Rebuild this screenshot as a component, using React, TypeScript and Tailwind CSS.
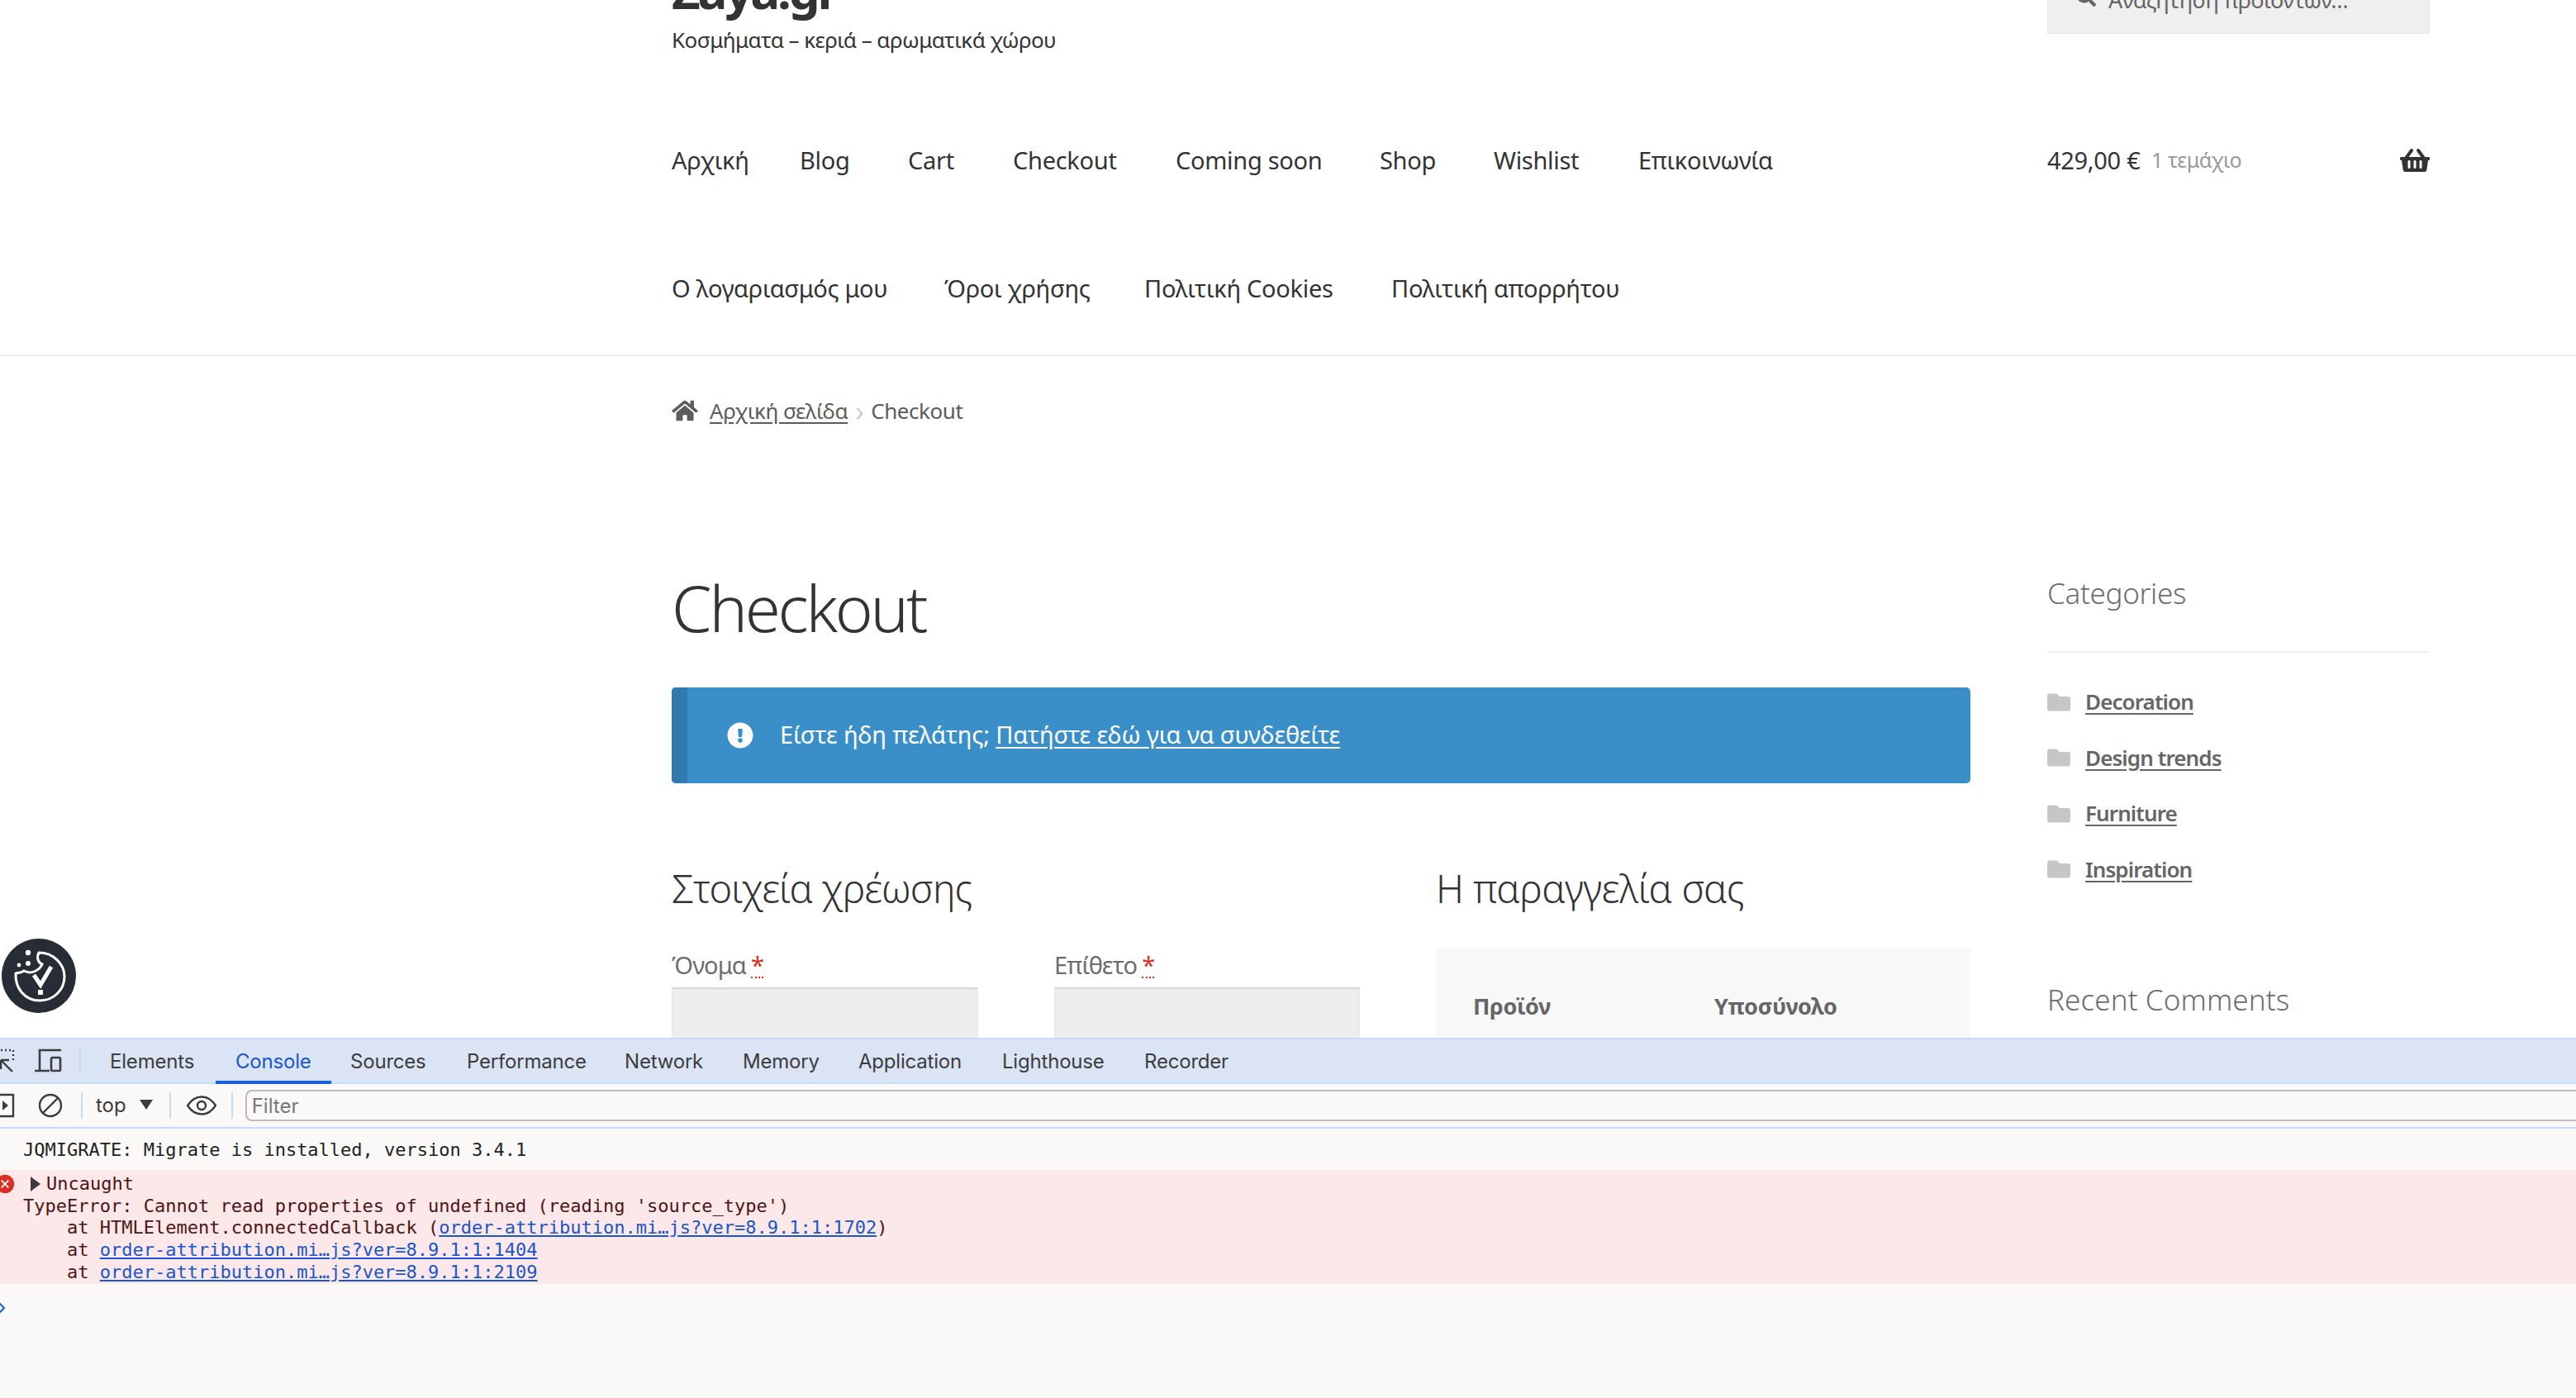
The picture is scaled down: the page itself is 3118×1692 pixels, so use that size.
import React from "react";
import { FaHome, FaShoppingBasket, FaFolder, FaSearch, FaExclamationCircle } from "react-icons/fa";

const NavItem = ({ w, label }: { w: string; label: string }) => (
  <a className={`${w} block whitespace-nowrap text-[#333333]`}>{label}</a>
);

const Cat = ({ label }: { label: string }) => (
  <li className="flex h-[67.5px] items-center">
    <FaFolder className="h-[28px] w-[28px] shrink-0 text-[#c6c6c6]" />
    <a className="ml-[18px] text-[26px] font-semibold tracking-[-0.9px] text-[#666666] underline underline-offset-4">{label}</a>
  </li>
);

const Req = () => (
  <span className="ml-[6px] border-b-2 border-dotted border-[#d9301c] leading-none text-[#d9301c]">*</span>
);

const Tab = ({ w, label, active }: { w: string; label: string; active?: boolean }) => (
  <div className={`${w} relative flex h-full items-center pt-[2px] text-[24px] tracking-[-0.2px] ${active ? "text-[#1a56c9]" : "text-[#3c3c3c]"}`}>
    {label}
  </div>
);

const Link = ({ children }: { children: React.ReactNode }) => (
  <a className="text-[#1a56c9] underline underline-offset-2">{children}</a>
);

const Sep = ({ cls }: { cls: string }) => <div className={`${cls} h-[32px] w-[2px] shrink-0 bg-[#c9dcf6]`} />;

export default function App() {
  return (
    <div className="relative flex h-[1692px] w-[3118px] flex-col overflow-hidden bg-white font-['Noto_Sans',sans-serif]">
      {/* Page */}
      <div className="h-[1256px] shrink-0 overflow-hidden bg-white">
        <header className="h-[431px] border-b-2 border-[#eeeeee] pl-[813px]">
          <div className="flex h-[116px] w-[2128px] justify-between">
            <div>
              <div className="-mt-[54px] text-[60px] font-bold leading-[84px] tracking-[-3.2px] text-[#333333]">Zaya.gr</div>
              <div className="text-[26px] leading-[36px] tracking-[-0.55px] text-[#333333]">Κοσμήματα – κεριά – αρωματικά χώρου</div>
            </div>
            <div className="-mt-[40px] flex h-[81px] w-[463px] items-start gap-[15px] border border-[#e8e8e8] bg-[#efefef] pl-[34px] pt-[21px] text-[27px] leading-[36px] text-[#666666]">
              <FaSearch className="mt-[2px] h-[24px] w-[24px]" />
              <span className="tracking-[-0.6px]">Αναζήτηση προϊόντων…</span>
            </div>
          </div>
          <div className="flex h-[155px] w-[2128px] items-center text-[29px] tracking-[-0.3px]">
            <NavItem w="w-[155px]" label="Αρχική" />
            <NavItem w="w-[131px]" label="Blog" />
            <NavItem w="w-[127px]" label="Cart" />
            <NavItem w="w-[197px]" label="Checkout" />
            <NavItem w="w-[247px]" label="Coming soon" />
            <NavItem w="w-[138px]" label="Shop" />
            <NavItem w="w-[175px]" label="Wishlist" />
            <NavItem w="w-[495px]" label="Επικοινωνία" />
            <div className="flex w-[463px] items-center">
              <span className="w-[126px] whitespace-nowrap text-[#333333]">429,00 €</span>
              <span className="text-[25px] tracking-[-0.4px] text-[#999999]">1 τεμάχιο</span>
              <FaShoppingBasket className="ml-auto h-[32px] w-[36px] text-[#333333]" />
            </div>
          </div>
          <div className="flex h-[155px] items-center text-[29px] tracking-[-0.3px]">
            <NavItem w="w-[330px]" label="Ο λογαριασμός μου" />
            <NavItem w="w-[242px]" label="Όροι χρήσης" />
            <NavItem w="w-[299px]" label="Πολιτική Cookies" />
            <NavItem w="w-[300px]" label="Πολιτική απορρήτου" />
          </div>
        </header>

        <div className="flex h-[132px] items-center pl-[813px] text-[26px] tracking-[-0.45px] text-[#5c5c5c]">
          <FaHome className="h-[28px] w-[32px] text-[#5c5c5c]" />
          <a className="ml-[14px] underline underline-offset-4">Αρχική σελίδα</a>
          <span className="mx-[9px] text-[34px] leading-none text-[#cccccc]">›</span>
          <span>Checkout</span>
        </div>

        <div className="flex gap-[93px] pl-[813px]">
          <main className="w-[1572px] shrink-0">
            <h1 className="mt-[122px] h-[100px] text-[78px] font-light leading-[100px] tracking-[-3.2px] text-[#333333]">Checkout</h1>
            <div className="mt-[47px] flex h-[116px] items-center overflow-hidden rounded-[5px] bg-[#3a8fc8] text-[29px] tracking-[-0.15px] text-white">
              <div className="h-full w-[19px] bg-[#3179ae]" />
              <FaExclamationCircle className="ml-[48px] h-[32px] w-[32px]" />
              <span className="ml-[32px] pb-[3px]">Είστε ήδη πελάτης; <a className="underline underline-offset-4">Πατήστε εδώ για να συνδεθείτε</a></span>
            </div>
            <div className="mt-[92px] flex gap-[91px]">
              <div className="w-[834px]">
                <h2 className="h-[70px] text-[47px] font-light leading-[70px] tracking-[-1px] text-[#333333]">Στοιχεία χρέωσης</h2>
                <div className="mt-[38px] flex gap-[92px]">
                  <div className="w-[371px]">
                    <div className="flex h-[40px] items-center text-[29px] tracking-[-0.8px] text-[#6d6d6d]">Όνομα <Req /></div>
                    <div className="mt-[7px] h-[80px] bg-[#eeeeee] shadow-[inset_0_2px_2px_rgba(0,0,0,0.1)]" />
                  </div>
                  <div className="w-[370px]">
                    <div className="flex h-[40px] items-center text-[29px] tracking-[-0.8px] text-[#6d6d6d]">Επίθετο <Req /></div>
                    <div className="mt-[7px] h-[80px] bg-[#eeeeee] shadow-[inset_0_2px_2px_rgba(0,0,0,0.1)]" />
                  </div>
                </div>
              </div>
              <div className="w-[647px]">
                <h2 className="h-[70px] text-[47px] font-light leading-[70px] tracking-[-0.5px] text-[#333333]">Η παραγγελία σας</h2>
                <div className="mt-[37px] flex h-[200px] bg-[#f8f8f8] pl-[45px] pt-[51px] text-[27px] font-bold leading-[40px] tracking-[-0.3px] text-[#666666]">
                  <span className="w-[292px]">Προϊόν</span>
                  <span>Υποσύνολο</span>
                </div>
              </div>
            </div>
          </main>

          <aside className="w-[463px] shrink-0">
            <h3 className="mt-[125px] h-[60px] text-[35px] font-light leading-[60px] tracking-[-0.3px] text-[#6d6d6d]">Categories</h3>
            <div className="mt-[40px] h-[2px] bg-[#f2f2f2]" />
            <ul className="mt-[26px]">
              <Cat label="Decoration" />
              <Cat label="Design trends" />
              <Cat label="Furniture" />
              <Cat label="Inspiration" />
            </ul>
            <h3 className="mt-[94px] h-[60px] text-[35px] font-light leading-[60px] tracking-[0.1px] text-[#6d6d6d]">Recent Comments</h3>
          </aside>
        </div>
      </div>

      {/* Cookie badge */}
      <div className="absolute left-[2px] top-[1136px] flex h-[90px] w-[90px] items-center justify-center rounded-full bg-[#282c34]">
        <svg viewBox="0 0 90 90" className="h-[90px] w-[90px]" fill="none" stroke="white" strokeWidth="3">
          <path d="M45 17 C42 23 44 29 49 31 C46 38 36 44 27 39 C23 42 19 41 17 42 C16 60 28 75 46 75 C63 75 76 62 76 46 C76 31 63 17 45 17 Z" />
          <circle cx="32" cy="17" r="3.2" fill="white" stroke="none" />
          <circle cx="32" cy="30" r="3" fill="white" stroke="none" />
          <circle cx="21" cy="32" r="2.4" fill="white" stroke="none" />
          <path d="M39 44 L47 56 L60 34" strokeWidth="5" />
          <rect x="44" y="62" width="6" height="6" fill="white" stroke="none" />
        </svg>
      </div>

      {/* DevTools */}
      <div className="flex min-h-0 flex-1 flex-col bg-[#faf9f7] font-['Inter',sans-serif]">
        <div className="flex h-[56px] shrink-0 items-center border-y-2 border-[#c7dcf8] bg-[#dae4f5]">
          <svg viewBox="0 0 20 30" className="-ml-[2px] h-[30px] w-[20px] shrink-0" fill="none" stroke="#3c3c3c" strokeWidth="2.4">
            <path d="M3 2h2M8 2h2M13 2h2M18 2v2M18 7v2M18 12v2" />
            <path d="M3 14h10M3 14v11M3 14l14 14" />
          </svg>
          <svg viewBox="0 0 34 30" className="ml-[24px] h-[30px] w-[34px] shrink-0" fill="none" stroke="#3c3c3c" strokeWidth="2.6">
            <path d="M32 2H6v24M0 27h18" />
            <rect x="20" y="11" width="11" height="16" rx="1.5" />
          </svg>
          <Sep cls="ml-[20px]" />
          <div className="ml-[35px] flex h-full items-center">
            <Tab w="w-[152px]" label="Elements" />
            <div className="relative h-full w-[139px]">
              <Tab w="w-full" label="Console" active />
              <div className="absolute -left-[24px] -bottom-[2px] h-[4px] w-[140px] bg-[#1a5fe0]" />
            </div>
            <Tab w="w-[141px]" label="Sources" />
            <Tab w="w-[191px]" label="Performance" />
            <Tab w="w-[143px]" label="Network" />
            <Tab w="w-[140px]" label="Memory" />
            <Tab w="w-[174px]" label="Application" />
            <Tab w="w-[172px]" label="Lighthouse" />
            <Tab w="w-[120px]" label="Recorder" />
          </div>
        </div>

        <div className="flex h-[54px] shrink-0 items-center border-b-2 border-[#c7dcf8]">
          <svg viewBox="0 0 18 30" className="h-[30px] w-[18px] shrink-0" fill="none" stroke="#3c3c3c" strokeWidth="2.4">
            <path d="M0 2h16v26H0" />
            <path d="M3 9l7 6-7 6z" fill="#3c3c3c" stroke="none" />
          </svg>
          <svg viewBox="0 0 30 30" className="ml-[28px] h-[30px] w-[30px] shrink-0" fill="none" stroke="#3c3c3c" strokeWidth="2.4">
            <circle cx="15" cy="15" r="13" />
            <path d="M6 24L24 6" />
          </svg>
          <Sep cls="ml-[22px]" />
          <span className="ml-[16px] text-[24px] text-[#3c3c3c]">top</span>
          <svg viewBox="0 0 16 12" className="ml-[16px] h-[12px] w-[16px] shrink-0 -mt-[2px]"><path d="M0 0h16l-8 12z" fill="#3c3c3c" /></svg>
          <Sep cls="ml-[20px]" />
          <svg viewBox="0 0 36 24" className="ml-[19px] h-[24px] w-[36px] shrink-0" fill="none" stroke="#3c3c3c" strokeWidth="2.4">
            <path d="M1 12C7 3 13 1.500 18 1.500S29 3 35 12C29 21 23 22.500 18 22.500S7 21 1 12Z" />
            <circle cx="18" cy="12" r="5" />
          </svg>
          <Sep cls="ml-[18px]" />
          <div className="ml-[15px] flex h-[38px] flex-1 items-center rounded-l-[8px] border-y-2 border-l-2 border-[#bbbbb8] pl-[6px] pt-[2px] text-[24px] text-[#777777] -mr-[20px]">Filter</div>
        </div>

        <div className="font-['DejaVu_Sans_Mono',monospace] text-[22px] leading-[26.7px]">
          <div className="flex h-[50px] items-center pl-[28px] pt-[3px] text-[#222222]">JQMIGRATE: Migrate is installed, version 3.4.1</div>
          <div className="h-[138px] bg-[#fce8e8] pt-[4px] text-[#4f1414]">
            <div className="flex h-[26.7px] items-center whitespace-pre">
              <svg viewBox="0 0 28 28" className="-ml-[8px] h-[24px] w-[28px] shrink-0">
                <circle cx="14" cy="14" r="13" fill="#d93025" />
                <path d="M9 9l10 10M19 9L9 19" stroke="white" strokeWidth="2" />
              </svg>
              <svg viewBox="0 0 12 18" className="ml-[17px] h-[18px] w-[12px] shrink-0"><path d="M0 0l12 9-12 9z" fill="#3c3c3c" /></svg>
              <span className="ml-[7px]">Uncaught</span>
            </div>
            <div className="whitespace-pre pl-[28px]">TypeError: Cannot read properties of undefined (reading 'source_type')</div>
            <div className="whitespace-pre pl-[81px]">at HTMLElement.connectedCallback (<Link>order-attribution.mi…js?ver=8.9.1:1:1702</Link>)</div>
            <div className="whitespace-pre pl-[81px]">at <Link>order-attribution.mi…js?ver=8.9.1:1:1404</Link></div>
            <div className="whitespace-pre pl-[81px]">at <Link>order-attribution.mi…js?ver=8.9.1:1:2109</Link></div>
          </div>
          <svg viewBox="0 0 8 14" className="-ml-[2px] mt-[22px] h-[14px] w-[8px]" fill="none" stroke="#1a5fe0" strokeWidth="2"><path d="M1 1l6 6-6 6" /></svg>
        </div>
      </div>
    </div>
  );
}
